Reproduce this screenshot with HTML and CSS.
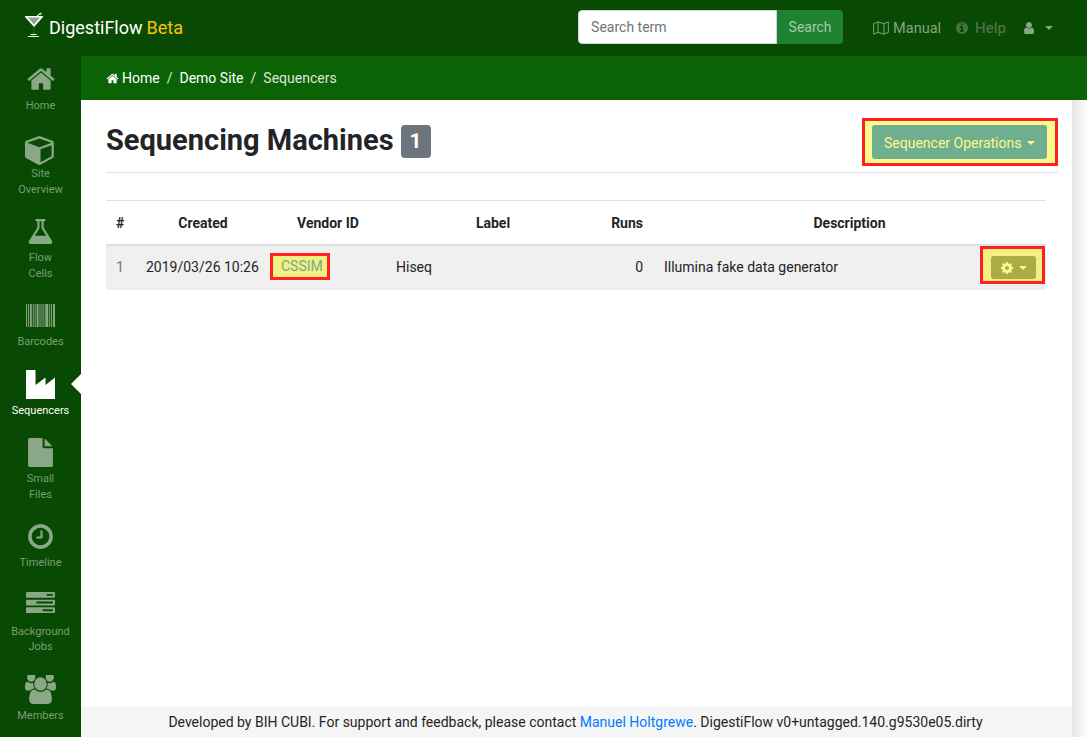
FILE: index.html
```html
<!DOCTYPE html>
<html lang="en">
<head>
    <meta charset="UTF-8">
    <meta name="viewport" content="width=device-width, initial-scale=1.0">
    <title>Sequencing Machines</title>
    <link rel="stylesheet" href="styles.css">
</head>
<body>
    <nav class="topbar">
        <a class="brand">
            <svg class="brand-icon" viewBox="0 0 18 25">
                <path fill="#fff" d="M0 4h18v1l-9 10L0 5z"/>
                <path fill="#8aa888" d="M3 5.500h12L9 12.500z"/>
                <path fill="#fff" d="M11.500 4l3.500-3 .6.8L13 4z"/>
                <path fill="#c8d6c6" d="M14 1.500l2-1 1 1.500-2 1z"/>
                <rect fill="#3f6f3c" x="8.600" y="15" width=".8" height="7"/>
                <rect fill="#fff" x="5.500" y="22" width="6" height="1"/>
                <rect fill="#fff" x="3" y="24" width="11" height="1"/>
            </svg>
            <span>DigestiFlow</span> <span class="brand-beta">Beta</span>
        </a>
        <form class="search">
            <input class="search-input" type="text" placeholder="Search term">
            <button class="search-button" type="button">Search</button>
        </form>
        <ul class="topnav">
            <li class="topnav-item">
                <svg class="topnav-icon map-icon" viewBox="0 0 18 16">
                    <path fill="none" stroke="currentColor" stroke-width="1.100" d="M.6 3l5-2 6.800 2 5-2v12l-5 2-6.800-2-5 2zM5.600 1v12M12.400 3v12"/>
                </svg>
                Manual
            </li>
            <li class="topnav-item dim">
                <svg class="topnav-icon" viewBox="0 0 1792 1792">
                    <path fill="currentColor" d="M1152 1376v-160q0-14-9-23t-23-9h-96v-512q0-14-9-23t-23-9h-320q-14 0-23 9t-9 23v160q0 14 9 23t23 9h96v320h-96q-14 0-23 9t-9 23v160q0 14 9 23t23 9h448q14 0 23-9t9-23zm-128-896v-160q0-14-9-23t-23-9h-192q-14 0-23 9t-9 23v160q0 14 9 23t23 9h192q14 0 23-9t9-23zm640 416q0 209-103 385.500t-279.500 279.500-385.500 103-385.500-103-279.500-279.500-103-385.500 103-385.500 279.500-279.500 385.500-103 385.500 103 279.500 279.500 103 385.500z"/>
                </svg>
                Help
            </li>
            <li class="topnav-item user-item">
                <svg class="topnav-icon" viewBox="0 0 1792 1792">
                    <path fill="currentColor" d="M1536 1399q0 109-62.500 187t-150.500 78h-854q-88 0-150.500-78t-62.500-187q0-85 8.500-160.500t31.500-152 58.500-131 94-89 134.500-34.500q131 128 313 128t313-128q76 0 134.500 34.500t94 89 58.500 131 31.500 152 8.500 160.500zm-256-887q0 159-112.500 271.500t-271.500 112.500-271.500-112.500-112.500-271.500 112.500-271.500 271.500-112.500 271.500 112.500 112.500 271.500z"/>
                </svg>
                <span class="caret"></span>
            </li>
        </ul>
    </nav>

    <div class="layout">
        <ul class="sidebar">
            <li class="side-item">
                <span class="side-icon"><svg width="30" height="30" viewBox="0 0 1792 1792"><path fill="currentColor" d="M1472 992v480q0 26-19 45t-45 19h-384v-384h-256v384h-384q-26 0-45-19t-19-45v-480q0-1 .5-3t.5-3l575-474 575 474q1 2 1 6zm223-69l-62 74q-8 9-21 11h-3q-13 0-21-7l-692-577-692 577q-12 8-24 7-13-2-21-11l-62-74q-8-10-7-23.500t11-21.500l719-599q32-26 76-26t76 26l244 204v-195q0-14 9-23t23-9h192q14 0 23 9t9 23v408l219 182q10 8 11 21.500t-7 23.500z"/></svg></span>
                <span class="side-label">Home</span>
            </li>
            <li class="side-item">
                <span class="side-icon low"><svg width="31" height="31" viewBox="0 0 1792 1792"><path fill="currentColor" d="M896 1629l640-349v-636l-640 233v752zm-64-865l698-254-698-254-698 254zm832-252v768q0 35-18 65t-49 47l-704 384q-28 16-61 16t-61-16l-704-384q-31-17-49-47t-18-65v-768q0-40 23-73t61-47l704-256q22-8 44-8t44 8l704 256q38 14 61 47t23 73z"/></svg></span>
                <span class="side-label">Site<br>Overview</span>
            </li>
            <li class="side-item">
                <span class="side-icon"><svg width="29" height="29" viewBox="0 0 1792 1792"><path fill="currentColor" d="M1591 1448q56 89 21.500 152.500t-140.500 63.500h-1152q-106 0-140.500-63.500t21.500-152.500l503-793v-399h-64q-26 0-45-19t-19-45 19-45 45-19h512q26 0 45 19t19 45-19 45-45 19h-64v399zm-779-725l-272 429h712l-272-429-20-31v-436h-128v436z"/></svg></span>
                <span class="side-label">Flow<br>Cells</span>
            </li>
            <li class="side-item">
                <span class="side-icon"><svg width="29" height="23" viewBox="0 0 30 26" preserveAspectRatio="none"><path fill="currentColor" d="M0 0h1v26H0zM2 0h1v26H2zM4 0h2v26H4zM7 0h1v26H7zM9 0h1v26H9zM11 0h2v26h-2zM14 0h1v26h-1zM16 0h1v26h-1zM18 0h1v26h-1zM20 0h3v26h-3zM24 0h1v26h-1zM26 0h1v26h-1zM28 0h2v26h-2z"/></svg></span>
                <span class="side-label">Barcodes</span>
            </li>
            <li class="side-item active">
                <span class="side-icon"><svg width="29" height="29" viewBox="0 0 29 29"><path fill="currentColor" d="M0 0h9.500v15l10-7.500v7.500l9.500-7.500V29H0z"/></svg></span>
                <span class="side-label">Sequencers</span>
            </li>
            <li class="side-item">
                <span class="side-icon"><svg width="25" height="29" viewBox="128 0 1536 1792"><path fill="currentColor" d="M1152 512v-472q22 14 36 28l408 408q14 14 28 36h-472zm-128 32q0 40 28 68t68 28h544v1056q0 40-28 68t-68 28h-1344q-40 0-68-28t-28-68v-1600q0-40 28-68t68-28h800v544z"/></svg></span>
                <span class="side-label">Small<br>Files</span>
            </li>
            <li class="side-item">
                <span class="side-icon"><svg width="29" height="29" viewBox="0 0 1792 1792"><path fill="currentColor" d="M1024 544v448q0 14-9 23t-23 9h-320q-14 0-23-9t-9-23v-64q0-14 9-23t23-9h224v-352q0-14 9-23t23-9h64q14 0 23 9t9 23zm416 352q0-148-73-273t-198-198-273-73-273 73-198 198-73 273 73 273 198 198 273 73 273-73 198-198 73-273zm224 0q0 209-103 385.500t-279.500 279.500-385.500 103-385.500-103-279.500-279.500-103-385.500 103-385.500 279.500-279.500 385.500-103 385.500 103 279.500 279.500 103 385.500z"/></svg></span>
                <span class="side-label">Timeline</span>
            </li>
            <li class="side-item">
                <span class="side-icon high"><svg width="29" height="23" viewBox="0 128 1792 1536" preserveAspectRatio="none"><path fill="currentColor" d="M1024 1408h640v-128h-640v128zm-384-512h1024v-128h-1024v128zm640-512h384v-128h-384v128zm512 832v256q0 26-19 45t-45 19h-1664q-26 0-45-19t-19-45v-256q0-26 19-45t45-19h1664q26 0 45 19t19 45zm0-512v256q0 26-19 45t-45 19h-1664q-26 0-45-19t-19-45v-256q0-26 19-45t45-19h1664q26 0 45 19t19 45zm0-512v256q0 26-19 45t-45 19h-1664q-26 0-45-19t-19-45v-256q0-26 19-45t45-19h1664q26 0 45 19t19 45z"/></svg></span>
                <span class="side-label">Background<br>Jobs</span>
            </li>
            <li class="side-item">
                <span class="side-icon"><svg width="31" height="29" viewBox="0 128 1920 1664" preserveAspectRatio="none"><path fill="currentColor" d="M593 896q-162 5-265 128h-134q-82 0-138-40.500t-56-118.500q0-353 124-353 6 0 43.500 21t97.500 42.500 119 21.500q67 0 133-23-5 37-5 66 0 139 81 256zm1071 637q0 120-73 189.500t-194 69.500h-874q-121 0-194-69.500t-73-189.500q0-53 3.500-103.500t14-109 26.500-108.500 43-97.500 62-81 85.500-53.500 111.500-20q10 0 43 21.500t73 48 107 48 135 21.500 135-21.500 107-48 73-48 43-21.500q61 0 111.500 20t85.500 53.500 62 81 43 97.500 26.500 108.500 14 109 3.500 103.500zm-1024-1277q0 106-75 181t-181 75-181-75-75-181 75-181 181-75 181 75 75 181zm704 384q0 159-112.500 271.500t-271.500 112.500-271.500-112.500-112.500-271.500 112.500-271.500 271.500-112.500 271.500 112.500 112.500 271.500zm576 225q0 78-56 118.500t-138 40.500h-134q-103-123-265-128 81-117 81-256 0-29-5-66 66 23 133 23 59 0 119-21.500t97.500-42.500 43.500-21q124 0 124 353zm-128-609q0 106-75 181t-181 75-181-75-75-181 75-181 181-75 181 75 75 181z"/></svg></span>
                <span class="side-label">Members</span>
            </li>
        </ul>

        <div class="main">
            <ol class="breadcrumb">
                <li class="crumb">
                    <svg class="crumb-home" viewBox="0 0 1792 1792"><path fill="currentColor" d="M1472 992v480q0 26-19 45t-45 19h-384v-384h-256v384h-384q-26 0-45-19t-19-45v-480q0-1 .5-3t.5-3l575-474 575 474q1 2 1 6zm223-69l-62 74q-8 9-21 11h-3q-13 0-21-7l-692-577-692 577q-12 8-24 7-13-2-21-11l-62-74q-8-10-7-23.500t11-21.500l719-599q32-26 76-26t76 26l244 204v-195q0-14 9-23t23-9h192q14 0 23 9t9 23v408l219 182q10 8 11 21.500t-7 23.500z"/></svg>
                    Home
                </li>
                <li class="crumb-sep">/</li>
                <li class="crumb">Demo Site</li>
                <li class="crumb-sep">/</li>
                <li class="crumb current">Sequencers</li>
            </ol>

            <div class="page">
                <div class="page-body">
                    <div class="content">
                        <div class="page-header">
                            <h1 class="page-title">Sequencing Machines <span class="count-badge">1</span></h1>
                            <div class="mark mark-ops">
                                <button class="ops-button" type="button">Sequencer Operations<span class="caret"></span></button>
                            </div>
                        </div>

                        <table class="machines">
                            <colgroup>
                                <col class="col-num">
                                <col class="col-created">
                                <col class="col-vendor">
                                <col class="col-label">
                                <col class="col-runs">
                                <col>
                                <col class="col-actions">
                            </colgroup>
                            <thead>
                                <tr>
                                    <th class="left">#</th>
                                    <th>Created</th>
                                    <th>Vendor ID</th>
                                    <th>Label</th>
                                    <th class="right">Runs</th>
                                    <th colspan="2">Description</th>
                                </tr>
                            </thead>
                            <tbody>
                                <tr>
                                    <td class="muted">1</td>
                                    <td>2019/03/26 10:26</td>
                                    <td class="vendor-cell"><span class="mark mark-vendor">CSSIM</span></td>
                                    <td>Hiseq</td>
                                    <td class="right">0</td>
                                    <td class="desc-cell">Illumina fake data generator</td>
                                    <td class="actions-cell">
                                        <div class="mark mark-gear">
                                            <button class="gear-button" type="button">
                                                <svg class="gear-icon" viewBox="0 0 1792 1792"><path fill="currentColor" d="M1152 896q0-106-75-181t-181-75-181 75-75 181 75 181 181 75 181-75 75-181zm512-109v222q0 12-8 23t-20 13l-185 28q-19 54-39 91 35 50 107 138 10 12 10 25t-9 23q-27 37-99 108t-94 71q-12 0-26-9l-138-108q-44 23-91 38-16 136-29 186-7 28-36 28h-222q-14 0-24.500-8.500t-11.500-21.500l-28-184q-49-16-90-37l-141 107q-10 9-25 9-14 0-25-11-126-114-165-168-7-10-7-23 0-12 8-23 15-21 51-66.500t54-70.500q-27-50-41-99l-183-27q-13-2-21-12.500t-8-23.500v-222q0-12 8-23t19-13l186-28q14-46 39-92-40-57-107-138-10-12-10-24 0-10 9-23 26-36 98.500-107.500t94.500-71.500q13 0 26 10l138 107q44-23 91-38 16-136 29-186 7-28 36-28h222q14 0 24.500 8.500t11.500 21.500l28 184q49 16 90 37l142-107q9-9 24-9 13 0 25 10 129 119 165 170 7 8 7 22 0 12-8 23-15 21-51 66.500t-54 70.500q26 50 41 98l183 28q13 2 21 12.500t8 23.500z"/></svg>
                                                <span class="caret"></span>
                                            </button>
                                        </div>
                                    </td>
                                </tr>
                            </tbody>
                        </table>
                    </div>

                    <footer class="footer">
                        Developed by BIH CUBI. For support and feedback, please contact <a class="footer-link">Manuel Holtgrewe</a>. DigestiFlow v0+untagged.140.g9530e05.dirty
                    </footer>
                </div>
                <div class="gutter"></div>
            </div>
        </div>
    </div>
</body>
</html>
```

FILE: styles.css
```css
* {
  box-sizing: border-box;
}

html,
body {
  height: 100%;
}

body {
  margin: 0;
  display: flex;
  flex-direction: column;
  font-family: Roboto, "Liberation Sans", sans-serif;
  font-size: 14px;
  line-height: 21px;
  color: #212529;
  background: #fff;
  overflow: hidden;
}

ul,
ol {
  list-style: none;
  margin: 0;
  padding: 0;
}

/* top bar */
.topbar {
  height: 56px;
  flex: none;
  display: flex;
  align-items: center;
  padding: 0 34px 2px 25px;
  background: #084a03;
}

.brand {
  display: flex;
  align-items: center;
  gap: 4px;
  font-size: 18px;
  color: #fff;
}

.brand-icon {
  width: 18px;
  height: 25px;
  margin: 0 2px 5px 0;
}

.brand-beta {
  color: #ffc107;
}

.search {
  display: flex;
  margin-left: auto;
  height: 34px;
}

.search-input {
  width: 199px;
  height: 34px;
  padding: 0 12px;
  border: 1px solid #ced4da;
  border-radius: 4px 0 0 4px;
  font: 14px Roboto, sans-serif;
  color: #495057;
}

.search-input::placeholder {
  color: #6c757d;
}

.search-button {
  width: 66px;
  height: 34px;
  border: none;
  border-radius: 0 4px 4px 0;
  background: #1e8232;
  color: #a5cda9;
  font: 14px Roboto, sans-serif;
}

.topnav {
  display: flex;
  align-items: center;
  margin: 2px 0 0 30px;
  gap: 14px;
  font-size: 14.5px;
}

.topnav-item {
  display: flex;
  align-items: center;
  gap: 4px;
  color: #86a684;
}

.topnav-item.dim {
  gap: 6px;
  color: #487245;
  font-size: 15px;
  font-weight: 500;
}

.user-item {
  gap: 9px;
  margin-left: 2px;
}

.topnav-icon {
  width: 14px;
  height: 14px;
}

.map-icon {
  width: 16px;
}

.caret {
  display: inline-block;
  width: 0;
  height: 0;
  border-top: 4px solid currentColor;
  border-left: 4px solid transparent;
  border-right: 4px solid transparent;
}

.layout {
  flex: 1;
  display: flex;
  min-height: 0;
}

/* sidebar */
.sidebar {
  width: 81px;
  flex: none;
  padding-top: 3.5px;
  background: #084a03;
}

.side-item {
  position: relative;
  display: flex;
  flex-direction: column;
  align-items: center;
  padding-bottom: 15.2px;
  font-size: 11px;
  line-height: 15.4px;
  text-align: center;
  color: #7a9d78;
}

.side-icon {
  height: 38px;
  padding-top: 1px;
  display: flex;
  align-items: center;
  color: #8aa888;
}

.side-icon.low {
  padding-top: 4px;
}

.side-icon.high {
  padding-top: 0;
  padding-bottom: 2px;
}

.side-item.active,
.side-item.active .side-icon {
  color: #fff;
}

.side-item.active::after {
  content: "";
  position: absolute;
  right: 0;
  top: 9px;
  border-top: 10px solid transparent;
  border-bottom: 10px solid transparent;
  border-right: 10px solid #fff;
}

/* breadcrumb */
.main {
  flex: 1;
  min-width: 0;
  display: flex;
  flex-direction: column;
}

.breadcrumb {
  height: 44px;
  flex: none;
  display: flex;
  align-items: center;
  gap: 7px;
  padding-left: 25px;
  background: #0b6305;
  color: #dbe7da;
}

.crumb {
  display: flex;
  align-items: center;
  gap: 3px;
  color: #fff;
}

.crumb.current {
  color: #dbe7da;
}

.crumb-home {
  width: 13px;
  height: 13px;
}

/* page body */
.page {
  flex: 1;
  display: flex;
  min-height: 0;
}

.page-body {
  flex: 1;
  min-width: 0;
  display: flex;
  flex-direction: column;
}

.content {
  flex: 1;
  padding: 18px 26px 0 25px;
}

.gutter {
  width: 15px;
  flex: none;
  background: linear-gradient(to right, #e5e5e5, #fdfdfd);
}

.page-header {
  display: flex;
  align-items: flex-start;
  justify-content: space-between;
  height: 55px;
  margin-right: -12px;
  border-bottom: 1px solid #dee2e6;
}

.page-title {
  margin: 0;
  display: flex;
  align-items: center;
  gap: 7px;
  height: 44px;
  font-size: 29px;
  font-weight: 700;
  line-height: 44px;
}

.count-badge {
  display: inline-block;
  width: 30px;
  height: 33px;
  margin-top: 2px;
  border-radius: 4px;
  background: #6c757d;
  color: #fff;
  font-size: 21px;
  line-height: 33px;
  text-align: center;
}

.mark {
  display: inline-block;
  border: 3px solid #ff2020;
  background: #fafa8c;
}

.mark-ops {
  padding: 4px 8px 4px 7px;
}

.ops-button {
  display: flex;
  align-items: center;
  gap: 6px;
  height: 34px;
  width: 175px;
  padding: 1px 12px 0;
  border: none;
  border-radius: 3px;
  background: #6fae8e;
  color: #fafa8c;
  font: 14px Roboto, sans-serif;
  white-space: nowrap;
}

/* table */
.machines {
  width: 100%;
  table-layout: fixed;
  border-collapse: collapse;
  margin-top: 27px;
  border-top: 1px solid #dee2e6;
}

.col-num {
  width: 30px;
}

.col-created {
  width: 134px;
}

.col-vendor {
  width: 116px;
}

.col-label {
  width: 214px;
}

.col-runs {
  width: 53px;
}

.col-actions {
  width: 80px;
}

.machines th {
  height: 44px;
  padding: 2px 10px 0;
  text-align: center;
  font-weight: 700;
  border-bottom: 2px solid #dee2e6;
}

.machines td {
  height: 45px;
  padding: 0 10px;
  background: #f0f0f0;
}

.machines .left {
  text-align: left;
}

.machines .right {
  text-align: right;
}

.muted {
  color: #6c757d;
}

.machines .desc-cell {
  padding-left: 11px;
}

.machines .vendor-cell {
  padding: 0;
}

.mark-vendor {
  display: block;
  width: 60px;
  height: 27px;
  margin-bottom: 2px;
  padding-left: 8px;
  color: #6fae8e;
  line-height: 21px;
  background: #f4ef82;
}

.machines .actions-cell {
  padding: 0;
}

.mark-gear {
  display: block;
  width: 65px;
  margin: 0 1px 5px auto;
  padding: 7px 6px 2px 8px;
  background: #f4ef82;
}

.gear-button {
  display: flex;
  align-items: center;
  justify-content: center;
  gap: 5px;
  width: 45px;
  height: 23px;
  padding: 0;
  border: none;
  border-radius: 3px;
  background: #acac44;
  color: #fafa8c;
}

.gear-icon {
  width: 14px;
  height: 14px;
}

.footer {
  height: 30px;
  flex: none;
  padding-right: 2px;
  background: #f5f5f5;
  text-align: center;
  line-height: 30px;
}

.footer-link {
  color: #007bff;
}
```
